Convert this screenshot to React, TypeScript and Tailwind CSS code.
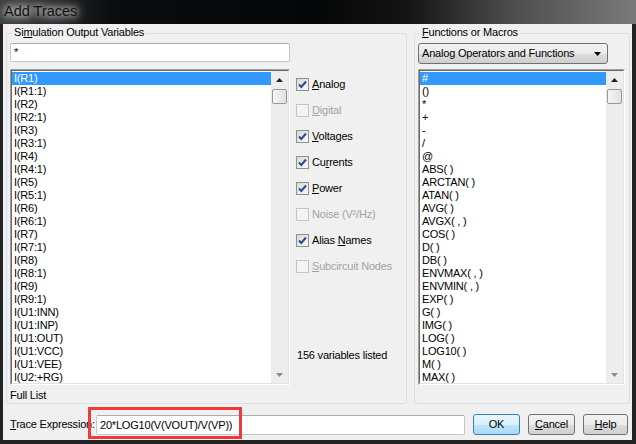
import React from "react";

const vars = [
  "I(R1)", "I(R1:1)", "I(R2)", "I(R2:1)", "I(R3)", "I(R3:1)", "I(R4)", "I(R4:1)",
  "I(R5)", "I(R5:1)", "I(R6)", "I(R6:1)", "I(R7)", "I(R7:1)", "I(R8)", "I(R8:1)",
  "I(R9)", "I(R9:1)", "I(U1:INN)", "I(U1:INP)", "I(U1:OUT)", "I(U1:VCC)", "I(U1:VEE)", "I(U2:+RG)",
];

const funcs = [
  "#", "()", "*", "+", "-", "/", "@", "ABS( )", "ARCTAN( )", "ATAN( )", "AVG( )", "AVGX( , )",
  "COS( )", "D( )", "DB( )", "ENVMAX( , )", "ENVMIN( , )", "EXP( )", "G( )", "IMG( )", "LOG( )",
  "LOG10( )", "M( )", "MAX( )",
];

function ScrollBar() {
  return (
    <div className="w-[17px] shrink-0 flex flex-col bg-[#ededed]">
      <div className="h-[17px] flex items-center justify-center">
        <svg width="7" height="4" viewBox="0 0 7 4">
          <path d="M3.5 0L7 4H0z" fill="#222" />
        </svg>
      </div>
      <div className="mx-[1px] mt-[1px] h-[15px] rounded-[2px] border border-[#979797] bg-[linear-gradient(90deg,#f6f6f6,#e0e0e0)]" />
      <div className="flex-1" />
      <div className="h-[17px] flex items-center justify-center">
        <svg width="7" height="4" viewBox="0 0 7 4">
          <path d="M0 0H7L3.5 4z" fill="#8a8a8a" />
        </svg>
      </div>
    </div>
  );
}

function ListBox({ items, width }: { items: string[]; width: string }) {
  return (
    <div className={`${width} h-[316px] border border-t-[#a0a0a0] border-l-[#a0a0a0] border-r-[#ffffff] border-b-[#ffffff]`}>
      <div className="h-full flex border border-t-[#696969] border-l-[#696969] border-r-[#e3e3e3] border-b-[#e3e3e3] bg-white">
        <div className="flex-1 pt-[1px] overflow-hidden">
          {items.map((t, i) => (
            <div
              key={i}
              className={`h-[13px] leading-[13px] pl-[2px] whitespace-nowrap ${i === 0 ? "bg-[#3399ff] text-white" : "text-black"}`}
            >
              {t}
            </div>
          ))}
        </div>
        <ScrollBar />
      </div>
    </div>
  );
}

function CheckRow({ checked, disabled, children }: { checked?: boolean; disabled?: boolean; children: React.ReactNode }) {
  return (
    <div className="h-[13px] flex items-center gap-[3px]">
      <div
        className={`w-[13px] h-[13px] shrink-0 border flex items-center justify-center ${
          disabled
            ? "border-[#c4c4c4] bg-[#f4f4f4]"
            : "border-[#8e8f8f] bg-[linear-gradient(135deg,#d9d9d9,#fafafa)]"
        }`}
      >
        {checked && (
          <svg width="11" height="11" viewBox="0 0 11 11">
            <path d="M2 5.5L4.3 8L9 2.5" fill="none" stroke="#2c4a92" strokeWidth="2" />
          </svg>
        )}
      </div>
      <span className={`whitespace-nowrap leading-[13px] ${disabled ? "text-[#a3a3a3]" : "text-black"}`}>{children}</span>
    </div>
  );
}

function Btn({ children, def, w }: { children: React.ReactNode; def?: boolean; w: string }) {
  return (
    <div
      className={`${w} h-[21px] shrink-0 rounded-[3px] border flex items-center justify-center ${
        def
          ? "border-[#3c7fb1] bg-[linear-gradient(180deg,#eaf6fd_0%,#d9f0fc_50%,#bee6fd_51%,#a7d9f5_100%)]"
          : "border-[#707070] bg-[linear-gradient(180deg,#f2f2f2_0%,#ebebeb_50%,#dddddd_51%,#cfcfcf_100%)]"
      }`}
    >
      <span className="leading-[13px]">{children}</span>
    </div>
  );
}

export default function App() {
  return (
    <div className="w-[636px] h-[444px] bg-[#232323] flex flex-col overflow-hidden font-['Liberation_Sans',Arial,sans-serif] text-[11px] text-black tracking-[-0.2px]">
      {/* Title bar */}
      <div className="h-[24px] shrink-0 pl-[4px] pt-[2px] bg-[linear-gradient(90deg,#3a3b3c_0%,#0b0c0d_18%,#050607_50%,#141414_64%,#4c4c4c_80%,#7a7a7a_100%)]">
        <span className="text-[14.5px] leading-[18px] tracking-normal text-[#101010] [text-shadow:0_0_6px_#fff,0_0_12px_#ddd,0_0_20px_rgba(255,255,255,0.7)]">
          Add Traces
        </span>
      </div>

      {/* Body */}
      <div className="flex-1 ml-[3px] mr-[4px] mb-[4px] bg-[#f0f0f0] flex flex-col">
        <div className="flex pl-[3px] pt-[9px] gap-[7px]">
          {/* Left group */}
          <div className="relative w-[401px] h-[371px] rounded-[3px] border border-[#d5dfe5] pl-[3px] pt-[9px] flex">
            <span className="absolute left-[5px] top-[-8px] px-[2px] bg-[#f0f0f0] leading-[13px]">
              Si<span className="underline">m</span>ulation Output Variables
            </span>
            <div className="w-[280px] flex flex-col">
              <div className="h-[19px] w-[280px] rounded-[2px] border border-[#c3c7cc] border-t-[#abadb3] bg-white pl-[3px] leading-[17px]">
                *
              </div>
              <div className="mt-[7px]">
                <ListBox items={vars} width="w-[280px]" />
              </div>
              <div className="mt-[4px] leading-[13px]">Full List</div>
            </div>
            <div className="ml-[6px] pt-[35px] flex flex-col">
              <div className="flex flex-col gap-[13px]">
                <CheckRow checked>
                  <span className="underline">A</span>nalog
                </CheckRow>
                <CheckRow disabled>
                  <span className="underline">D</span>igital
                </CheckRow>
                <CheckRow checked>
                  <span className="underline">V</span>oltages
                </CheckRow>
                <CheckRow checked>
                  Cu<span className="underline">r</span>rents
                </CheckRow>
                <CheckRow checked>
                  <span className="underline">P</span>ower
                </CheckRow>
                <CheckRow disabled>Noise (V²/Hz)</CheckRow>
                <CheckRow checked>
                  Alias <span className="underline">N</span>ames
                </CheckRow>
                <CheckRow disabled>
                  <span className="underline">S</span>ubcircuit Nodes
                </CheckRow>
              </div>
              <div className="mt-[76px] ml-[1px] leading-[13px] whitespace-nowrap">156 variables listed</div>
            </div>
          </div>

          {/* Right group */}
          <div className="relative w-[216px] h-[371px] rounded-[3px] border border-[#d5dfe5] pl-[3px] pt-[9px] flex flex-col">
            <span className="absolute left-[5px] top-[-8px] px-[2px] bg-[#f0f0f0] leading-[13px]">
              <span className="underline">F</span>unctions or Macros
            </span>
            <div className="w-[190px] h-[21px] rounded-[3px] border border-[#707070] bg-[linear-gradient(180deg,#f2f2f2_0%,#ebebeb_50%,#dddddd_51%,#cfcfcf_100%)] flex items-center pl-[3px] pr-[6px]">
              <span className="flex-1 whitespace-nowrap">Analog Operators and Functions</span>
              <svg width="7" height="4" viewBox="0 0 7 4">
                <path d="M0 0H7L3.5 4z" fill="#000" />
              </svg>
            </div>
            <div className="mt-[5px]">
              <ListBox items={funcs} width="w-[207px]" />
            </div>
          </div>
        </div>

        {/* Bottom row */}
        <div className="relative flex-1 pl-[7px] pt-[10px]">
          <div className="flex items-center h-[21px]">
            <div className="w-[86px] shrink-0 whitespace-nowrap">
              <span className="underline">T</span>race Expression:
            </div>
            <div className="w-[369px] h-[20px] shrink-0 rounded-[2px] border border-[#c3c7cc] border-t-[#abadb3] bg-white pl-[3px] leading-[18px] whitespace-nowrap">
              20*LOG10(V(VOUT)/V(VP))
            </div>
            <div className="ml-[8px] flex gap-[8px]">
              <Btn def w="w-[47px]">OK</Btn>
              <Btn w="w-[47px]">
                <span className="underline">C</span>ancel
              </Btn>
              <Btn w="w-[45px]">
                <span className="underline">H</span>elp
              </Btn>
            </div>
          </div>
          <div className="absolute left-[85px] top-[3px] w-[154px] h-[32px] border-[3px] border-[#ee3a3a]" />
        </div>
      </div>
    </div>
  );
}
